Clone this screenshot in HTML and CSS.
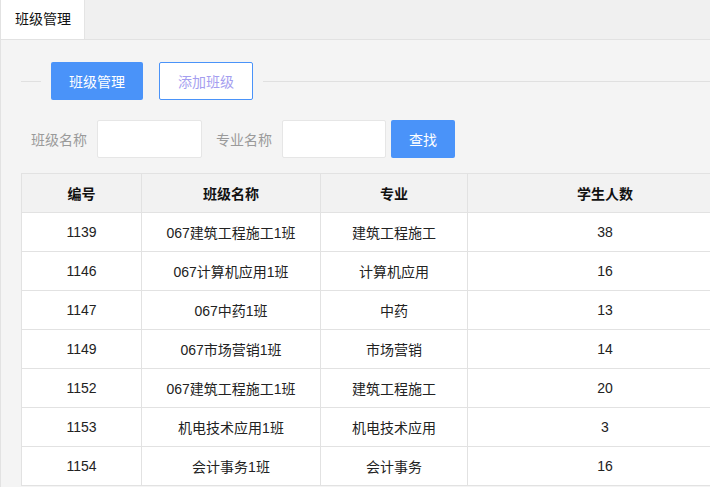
FILE: index.html
```html
<!DOCTYPE html>
<html lang="zh-CN">
<head>
<meta charset="utf-8">
<title>班级管理</title>
<link rel="stylesheet" href="styles.css">
</head>
<body>
<div class="page">
  <div class="tabbar">
    <div class="tab active">班级管理</div>
  </div>
  <div class="content">
    <div class="legend-row">
      <span class="rule short"></span>
      <div class="legend">
        <button class="btn btn-primary">班级管理</button>
        <button class="btn btn-outline">添加班级</button>
      </div>
      <span class="rule long"></span>
    </div>
    <form class="search">
      <label class="label">班级名称</label>
      <input class="input" type="text">
      <label class="label second">专业名称</label>
      <input class="input" type="text">
      <button type="button" class="btn btn-search">查找</button>
    </form>
    <table class="grid">
      <colgroup>
        <col class="c1"><col class="c2"><col class="c3"><col class="c4">
      </colgroup>
      <thead>
        <tr><th>编号</th><th>班级名称</th><th>专业</th><th>学生人数</th></tr>
      </thead>
      <tbody>
        <tr><td>1139</td><td>067建筑工程施工1班</td><td>建筑工程施工</td><td>38</td></tr>
        <tr><td>1146</td><td>067计算机应用1班</td><td>计算机应用</td><td>16</td></tr>
        <tr><td>1147</td><td>067中药1班</td><td>中药</td><td>13</td></tr>
        <tr><td>1149</td><td>067市场营销1班</td><td>市场营销</td><td>14</td></tr>
        <tr><td>1152</td><td>067建筑工程施工1班</td><td>建筑工程施工</td><td>20</td></tr>
        <tr><td>1153</td><td>机电技术应用1班</td><td>机电技术应用</td><td>3</td></tr>
        <tr><td>1154</td><td>会计事务1班</td><td>会计事务</td><td>16</td></tr>
      </tbody>
    </table>
  </div>
</div>
</body>
</html>
```
FILE: styles.css
```css
* { box-sizing: border-box; }
html, body {
  margin: 0;
  padding: 0;
  height: 100%;
  overflow: hidden;
}
body {
  background: #f4f4f4;
  font-family: "Liberation Sans", Arial, "Noto Sans CJK SC", sans-serif;
  font-size: 14px;
  color: #333;
}
.page {
  border-left: 1px solid #e2e2e2;
  min-height: 100%;
}
.tabbar {
  height: 40px;
  background: #f0f0f0;
  border-bottom: 1px solid #e2e2e2;
  display: flex;
}
.tab {
  width: 84px;
  height: 39px;
  line-height: 39px;
  padding-left: 14px;
  color: #111;
  font-size: 14px;
}
.tab.active { background: #fff; border-right: 1px solid #e4e4e4; }
.content {
  padding-left: 20px;
  width: 740px;
}
.legend-row {
  display: flex;
  align-items: center;
  height: 38px;
  margin-top: 22px;
}
.rule { height: 1px; background: #e0e0e0; }
.rule.short { width: 20px; }
.rule.long { flex: 1; }
.legend {
  display: flex;
  gap: 16px;
  padding: 0 10px;
}
.btn {
  height: 38px;
  border: 0;
  border-radius: 2px;
  font-family: inherit;
  font-size: 14px;
  padding: 0;
  cursor: pointer;
}
.btn-primary {
  width: 92px;
  background: #4a93f9;
  color: #fff;
}
.btn-outline {
  width: 94px;
  background: #fff;
  border: 1px solid #4a93f9;
  color: #a59ef0;
}
.search {
  display: flex;
  align-items: center;
  margin: 20px 0 0;
  padding-left: 10px;
  height: 38px;
}
.label {
  width: 56px;
  color: #9a9a9a;
  font-size: 14px;
  margin-right: 10px;
  white-space: nowrap;
}
.label.second { margin-left: 14px; }
.input {
  width: 105px;
  height: 38px;
  border: 1px solid #e6e6e6;
  border-radius: 2px;
  background: #fff;
  outline: none;
}
.search .input:nth-of-type(2) { width: 104px; }
.btn-search {
  width: 64px;
  margin-left: 5px;
  background: #4a93f9;
  color: #fff;
}
.grid {
  margin-top: 15px;
  border-collapse: collapse;
  table-layout: fixed;
  width: 721px;
  background: #fff;
}
.c1 { width: 120px; }
.c2 { width: 179px; }
.c3 { width: 147px; }
.c4 { width: 275px; }
.grid th, .grid td {
  border: 1px solid #e2e2e2;
  height: 39px;
  padding: 0;
  text-align: center;
  font-size: 14px;
}
.grid th {
  background: #f2f2f2;
  font-weight: bold;
  color: #111;
}
.grid td { color: #222; }
```
